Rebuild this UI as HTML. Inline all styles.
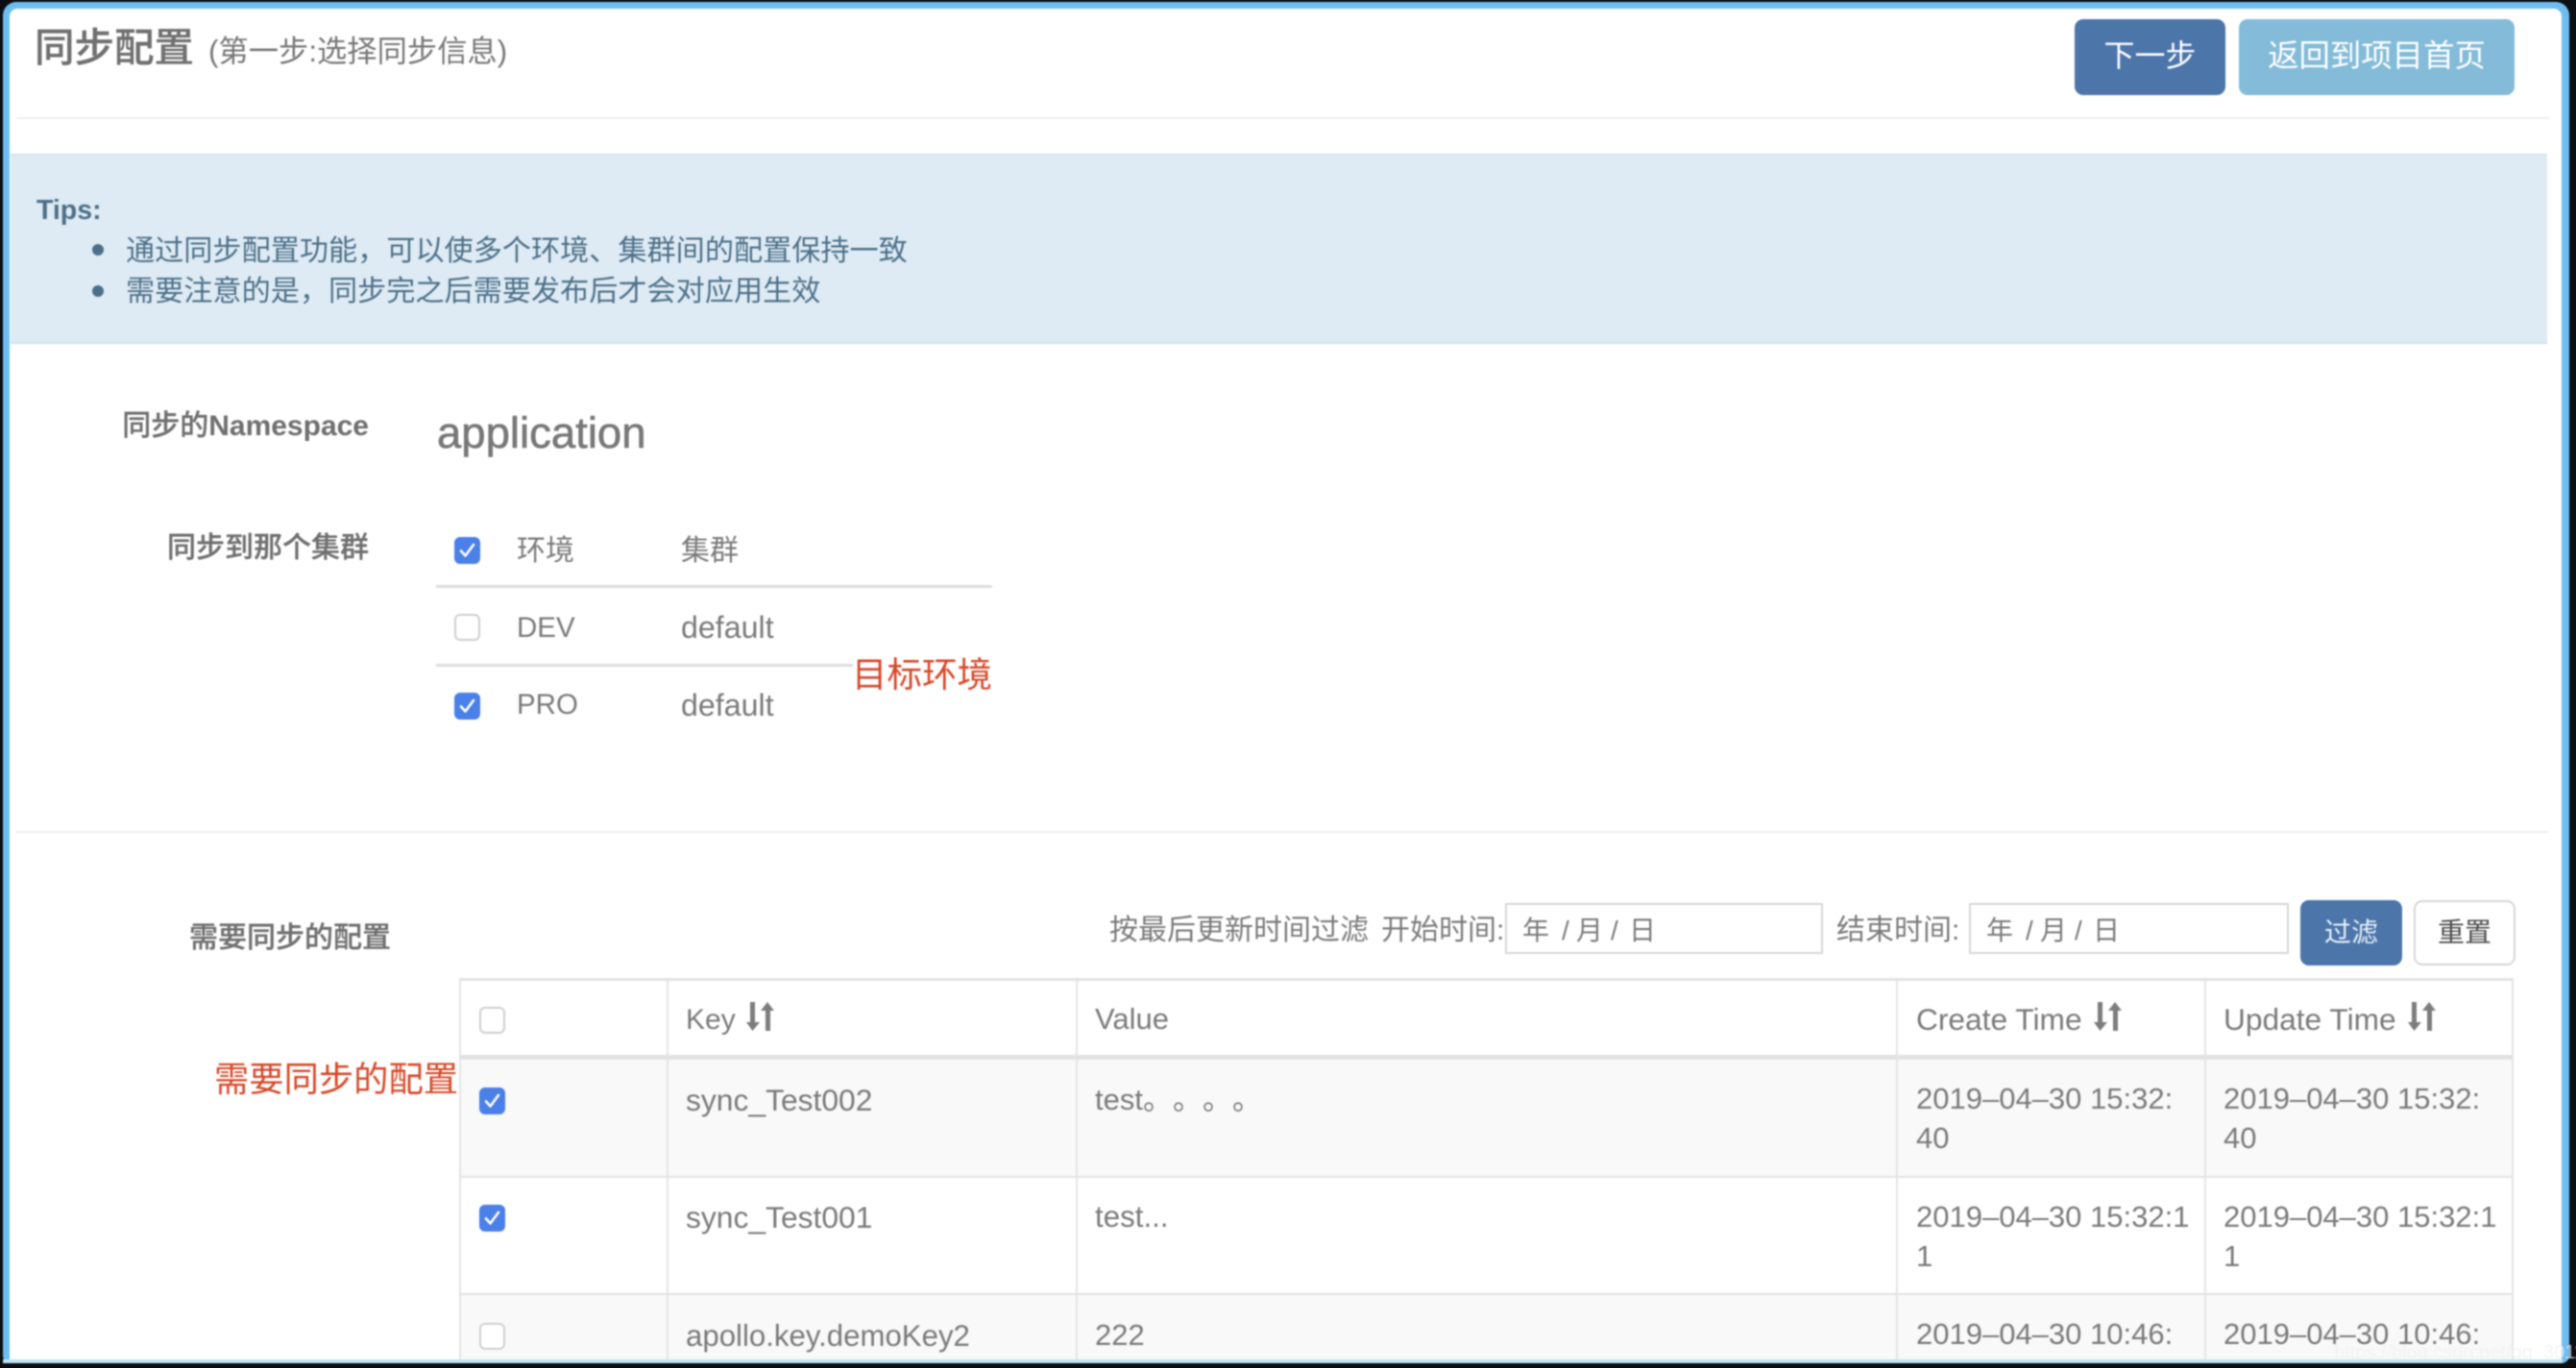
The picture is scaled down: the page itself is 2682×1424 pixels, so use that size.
<!DOCTYPE html>
<html lang="zh-CN">
<head>
<meta charset="utf-8">
<title>同步配置</title>
<style>
html,body{margin:0;padding:0;width:2682px;height:1424px;overflow:hidden;background:#0b0e12;}
body{position:relative;font-family:"Liberation Sans","Noto Sans CJK SC",sans-serif;color:#7a7a7a;}
#w{position:absolute;left:0;top:0;width:2682px;height:1424px;filter:blur(.7px);text-spacing-trim:space-all;}
.frame{position:absolute;left:3px;top:2px;width:2672px;height:1417px;background:#6fbdf0;border-radius:14px 14px 8px 8px;}
.page{position:absolute;left:10px;top:9px;width:2657px;height:1406px;background:#fff;border-radius:8px 8px 0 0;overflow:hidden;}
.a{position:absolute;}
.t{position:absolute;white-space:nowrap;line-height:40px;height:40px;}
.b{font-weight:500;color:#6f6f6f;-webkit-text-stroke:.3px #6f6f6f;}
.hr{position:absolute;height:2px;background:#f0f0f0;}
.line{position:absolute;height:3px;background:#dedede;}
.btn{position:absolute;border-radius:9px;text-align:center;color:#fff;box-sizing:border-box;}
.cb{position:absolute;width:27px;height:28px;border-radius:6px;box-sizing:border-box;}
.cb.on{background:#4a80e8;}
.cb.off{background:#fff;border:2px solid #cfcfcf;}
.cb svg{position:absolute;left:0;top:0;width:27px;height:28px;}
.v{position:absolute;width:2px;background:#e4e4e4;}
.h{position:absolute;height:2px;background:#e2e2e2;left:478px;width:2139px;}
.input{position:absolute;box-sizing:border-box;border:2px solid #d8d8d8;background:#fff;height:53px;top:940px;}
.sort{position:absolute;width:29px;height:30px;top:1043px;fill:#7d7d7d;}
.red{color:#d5492a;}
.d{font-size:31px;}
.y{font-size:28px;top:949px;}
</style>
</head>
<body>
<div id="w">
<div class="frame"></div>
<div class="page"></div>

<!-- header -->
<div class="t b" style="left:36px;top:30px;font-size:41.500px;">同步配置</div>
<div class="t" style="left:217px;top:34px;font-size:31.300px;color:#777;">(第一步:选择同步信息)</div>
<div class="btn" style="left:2160px;top:20px;width:157px;height:79px;background:#4c75aa;font-size:32px;line-height:76px;">下一步</div>
<div class="btn" style="left:2331px;top:20px;width:287px;height:79px;background:#83bbd8;font-size:32.400px;line-height:76px;">返回到项目首页</div>
<div class="hr" style="left:17px;top:122px;width:2637px;"></div>

<!-- tips -->
<div class="a" style="left:11px;top:160px;width:2641px;height:198px;background:#dfebf4;border-top:2px solid #d4e3ea;border-bottom:2px solid #cfe3ec;box-sizing:border-box;"></div>
<div class="t" style="left:38px;top:199px;font-size:28.500px;font-weight:bold;color:#4c7089;">Tips:</div>
<div class="a" style="left:96px;top:254px;width:12px;height:12px;border-radius:50%;background:#4c7089;"></div>
<div class="a" style="left:96px;top:297px;width:12px;height:12px;border-radius:50%;background:#4c7089;"></div>
<div class="t" style="left:131px;top:242px;font-size:30.150px;color:#4c7089;">通过同步配置功能，可以使多个环境、集群间的配置保持一致</div>
<div class="t" style="left:131px;top:284px;font-size:30.150px;color:#4c7089;">需要注意的是，同步完之后需要发布后才会对应用生效</div>

<!-- namespace -->
<div class="t b" style="right:2298px;top:424px;font-size:30px;">同步的<span style="font-weight:bold;-webkit-text-stroke:0;">Namespace</span></div>
<div class="t" style="left:455px;top:431px;font-size:45.500px;color:#777;-webkit-text-stroke:.6px #777;">application</div>

<!-- cluster -->
<div class="t b" style="left:174px;top:551px;font-size:30px;">同步到那个集群</div>
<div class="cb on" style="left:473px;top:559px;"><svg viewBox="0 0 27 28"><path d="M7 14.500l4.500 5L20 8" fill="none" stroke="#fff" stroke-width="2.6" stroke-linecap="round" stroke-linejoin="round"/></svg></div>
<div class="t" style="left:538px;top:554px;font-size:30px;">环境</div>
<div class="t" style="left:709px;top:554px;font-size:30px;">集群</div>
<div class="line" style="left:454px;top:609px;width:579px;"></div>
<div class="cb off" style="left:473px;top:639px;"></div>
<div class="t" style="left:538px;top:634px;font-size:29.500px;">DEV</div>
<div class="t" style="left:709px;top:633px;font-size:32.200px;">default</div>
<div class="line" style="left:454px;top:691px;width:434px;"></div>
<div class="cb on" style="left:473px;top:721px;"><svg viewBox="0 0 27 28"><path d="M7 14.500l4.500 5L20 8" fill="none" stroke="#fff" stroke-width="2.6" stroke-linecap="round" stroke-linejoin="round"/></svg></div>
<div class="t" style="left:538px;top:714px;font-size:29.500px;">PRO</div>
<div class="t" style="left:709px;top:714px;font-size:32.200px;">default</div>
<div class="t red" style="left:887px;top:683px;font-size:36.500px;">目标环境</div>

<div class="hr" style="left:17px;top:865px;width:2637px;"></div>

<!-- sync section -->
<div class="t b" style="left:197px;top:957px;font-size:30px;">需要同步的配置</div>
<div class="t" style="left:1155px;top:949px;font-size:30px;">按最后更新时间过滤</div>
<div class="t" style="left:1438px;top:949px;font-size:30px;">开始时间:</div>
<div class="input" style="left:1567px;width:331px;"></div>
<div class="t y" style="left:1585px;">年</div><div class="t y" style="left:1626px;">/</div><div class="t y" style="left:1641px;">月</div><div class="t y" style="left:1677px;">/</div><div class="t y" style="left:1696px;">日</div>
<div class="t" style="left:1912px;top:949px;font-size:30px;">结束时间:</div>
<div class="input" style="left:2050px;width:333px;"></div>
<div class="t y" style="left:2068px;">年</div><div class="t y" style="left:2109px;">/</div><div class="t y" style="left:2124px;">月</div><div class="t y" style="left:2160px;">/</div><div class="t y" style="left:2179px;">日</div>
<div class="btn" style="left:2395px;top:937px;width:106px;height:68px;background:#4c75aa;font-size:28px;line-height:68px;color:#e8f3fb;">过滤</div>
<div class="btn" style="left:2513px;top:937px;width:106px;height:68px;background:#fff;border:2px solid #d6d6d6;font-size:28px;line-height:64px;color:#4a4a4a;">重置</div>

<div class="t red" style="left:223px;top:1104px;font-size:36.300px;">需要同步的配置</div>

<!-- table backgrounds -->
<div class="a" style="left:478px;top:1103px;width:2138px;height:121px;background:#f9f9f9;"></div>
<div class="a" style="left:478px;top:1348px;width:2138px;height:68px;background:#f9f9f9;"></div>
<!-- table rules -->
<div class="h" style="top:1018px;height:3px;"></div>
<div class="h" style="top:1098px;height:5px;"></div>
<div class="h" style="top:1224px;"></div>
<div class="h" style="top:1346px;"></div>
<div class="v" style="left:478px;top:1018px;height:398px;"></div>
<div class="v" style="left:694px;top:1018px;height:398px;"></div>
<div class="v" style="left:1120px;top:1018px;height:398px;"></div>
<div class="v" style="left:1974px;top:1018px;height:398px;"></div>
<div class="v" style="left:2295px;top:1018px;height:398px;"></div>
<div class="v" style="left:2615px;top:1018px;height:398px;"></div>

<!-- table header -->
<div class="cb off" style="left:499px;top:1048px;"></div>
<div class="t" style="left:714px;top:1042px;font-size:30px;">Key</div>
<svg class="sort" style="left:777px;" viewBox="0 0 29 30"><path d="M4 0h5v21h5L6.500 30 0 21h4z"/><path d="M20 30V9h-5l7-9 7 9h-4v21z"/></svg>
<div class="t" style="left:1140px;top:1041px;font-size:31px;">Value</div>
<div class="t" style="left:1995px;top:1041px;font-size:31.700px;">Create Time</div>
<svg class="sort" style="left:2180px;" viewBox="0 0 29 30"><path d="M4 0h5v21h5L6.500 30 0 21h4z"/><path d="M20 30V9h-5l7-9 7 9h-4v21z"/></svg>
<div class="t" style="left:2315px;top:1041px;font-size:31.700px;">Update Time</div>
<svg class="sort" style="left:2507px;" viewBox="0 0 29 30"><path d="M4 0h5v21h5L6.500 30 0 21h4z"/><path d="M20 30V9h-5l7-9 7 9h-4v21z"/></svg>

<!-- row 1 -->
<div class="cb on" style="left:499px;top:1132px;"><svg viewBox="0 0 27 28"><path d="M7 14.500l4.500 5L20 8" fill="none" stroke="#fff" stroke-width="2.6" stroke-linecap="round" stroke-linejoin="round"/></svg></div>
<div class="t" style="left:714px;top:1125px;font-size:31.800px;">sync_Test002</div>
<div class="t" style="left:1140px;top:1125px;font-size:31px;">test。。。。</div>
<div class="t d" style="left:1995px;top:1124px;">2019–04–30 15:32:</div>
<div class="t d" style="left:1995px;top:1165px;">40</div>
<div class="t d" style="left:2315px;top:1124px;">2019–04–30 15:32:</div>
<div class="t d" style="left:2315px;top:1165px;">40</div>

<!-- row 2 -->
<div class="cb on" style="left:499px;top:1254px;"><svg viewBox="0 0 27 28"><path d="M7 14.500l4.500 5L20 8" fill="none" stroke="#fff" stroke-width="2.6" stroke-linecap="round" stroke-linejoin="round"/></svg></div>
<div class="t" style="left:714px;top:1247px;font-size:31.800px;">sync_Test001</div>
<div class="t" style="left:1140px;top:1247px;font-size:31.300px;">test...</div>
<div class="t d" style="left:1995px;top:1247px;">2019–04–30 15:32:1</div>
<div class="t d" style="left:1995px;top:1288px;">1</div>
<div class="t d" style="left:2315px;top:1247px;">2019–04–30 15:32:1</div>
<div class="t d" style="left:2315px;top:1288px;">1</div>

<!-- row 3 -->
<div class="cb off" style="left:499px;top:1377px;"></div>
<div class="t" style="left:714px;top:1371px;font-size:31.200px;">apollo.key.demoKey2</div>
<div class="t" style="left:1140px;top:1370px;font-size:31px;">222</div>
<div class="t d" style="left:1995px;top:1369px;">2019–04–30 10:46:</div>
<div class="t d" style="left:2315px;top:1369px;">2019–04–30 10:46:</div>

<!-- watermark -->
<div class="t" style="left:2430px;top:1388px;font-size:20px;color:rgba(240,240,240,.75);">https://blog.csdn.net/qq_3011111</div>

<!-- bottom edge over content -->
<div class="a" style="left:3px;top:1415px;width:2665px;height:4px;background:#bfe6f3;"></div>
<div class="a" style="left:0;top:1419px;width:2682px;height:5px;background:#0b0e12;"></div>
</div>
</body>
</html>
